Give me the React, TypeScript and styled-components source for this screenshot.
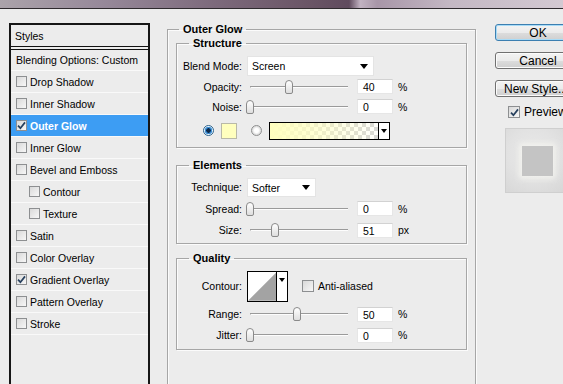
import styled, { createGlobalStyle } from 'styled-components';

const GlobalStyle = createGlobalStyle`
  html, body {
    margin: 0;
    padding: 0;
    background: #ececec;
    overflow: hidden;
  }
  body {
    width: 563px;
    height: 384px;
    font-family: "Liberation Sans", Arial, sans-serif;
    font-size: 10.5px;
    color: #000;
  }
  * { box-sizing: border-box; }
`;

const StyledPage = styled.div`
  width: 563px;
  height: 384px;
  overflow: hidden;
`;
const StyledTitleStrip = styled.div`
  height: 9px;
  border-bottom: 1px solid #2e2a2e;
  background: linear-gradient(90deg, #aba3aa 0%, #97899a 18%, #7d6a7c 38%, #6a5566 55%, #604b5e 62%, #c2b3c2 64%, #a896a8 67%, #c4b8c4 80%, #d3c9d2 100%);
`;
const StyledMain = styled.div`
  display: flex;
  align-items: flex-start;
  padding: 14px 0 0 9px;
`;

/* ---------- left list ---------- */
const StyledList = styled.div`
  flex: none;
  width: 141px;
  height: 372px;
  border: 2px solid #161616;
`;
const StyledListHead = styled.div`
  height: 25px;
  padding-left: 4px;
  display: flex;
  align-items: center;
  border-bottom: 4px double #111;
`;
const StyledListRow = styled.div<{ $sel?: boolean; $indent?: boolean; $h?: number }>`
  height: ${(p) => p.$h ?? 22}px;
  display: flex;
  align-items: center;
  gap: 3px;
  padding-left: ${(p) => (p.$indent ? 18 : 5)}px;
  border-bottom: 1px solid #f9f9f9;
  background: ${(p) => (p.$sel ? '#3d9df3' : 'transparent')};
  color: ${(p) => (p.$sel ? '#fff' : '#000')};
  font-weight: ${(p) => (p.$sel ? 'bold' : 'normal')};
`;
const StyledListText = styled.span``;
const StyledCheck = styled.span<{ $size?: number }>`
  flex: none;
  width: ${(p) => p.$size ?? 11}px;
  height: ${(p) => p.$size ?? 11}px;
  border: 1px solid #8d8f91;
  background: linear-gradient(135deg, #d9d9d9, #f7f7f7);
  display: flex;
  align-items: center;
  justify-content: center;
`;

/* ---------- center settings ---------- */
const StyledSettings = styled.div`
  flex: none;
  width: 309px;
  margin-left: 17px;
`;
const StyledFieldset = styled.fieldset<{ $top?: number; $side?: number; $h?: number }>`
  margin: ${(p) => p.$top ?? 0}px ${(p) => p.$side ?? 0}px 0;
  padding: 0;
  min-width: 0;
  height: ${(p) => (p.$h ? `${p.$h}px` : 'auto')};
  border: 1px solid #a6a6a6;
  box-shadow: 1px 1px 0 #fbfbfb, inset 1px 1px 0 #fbfbfb;
`;
const StyledLegend = styled.legend<{ $ml?: number }>`
  margin-left: ${(p) => p.$ml ?? 12}px;
  padding: 0 4px;
  font-weight: bold;
  font-size: 11px;
  line-height: 12px;
`;
const StyledGroupBody = styled.div<{ $pt: number; $pb: number }>`
  padding: ${(p) => p.$pt}px 0 ${(p) => p.$pb}px;
`;
const StyledRow = styled.div<{ $h: number; $pl?: number }>`
  height: ${(p) => p.$h}px;
  padding-left: ${(p) => p.$pl ?? 0}px;
  display: flex;
  align-items: center;
`;
const StyledLabel = styled.span`
  flex: none;
  width: 65px;
  text-align: right;
  margin-right: 4px;
`;
const StyledSelect = styled.div<{ $w: number; $h: number }>`
  width: ${(p) => p.$w}px;
  height: ${(p) => p.$h}px;
  margin-left: 1px;
  background: #fff;
  border: 1px solid #e4e4e4;
  display: flex;
  align-items: center;
  justify-content: space-between;
  padding: 1px 5px 0 4px;
`;
const StyledArrow = styled.span`
  width: 0;
  height: 0;
  border-left: 4px solid transparent;
  border-right: 4px solid transparent;
  border-top: 5px solid #000;
`;
const StyledSlider = styled.div`
  position: relative;
  flex: none;
  width: 106px;
  height: 16px;
`;
const StyledTrack = styled.div`
  position: absolute;
  left: 4px;
  right: 4px;
  top: 7px;
  height: 2px;
  border-top: 1px solid #9a9a9a;
  border-bottom: 1px solid #fdfdfd;
  border-left: 1px solid #9a9a9a;
`;
const StyledThumb = styled.div`
  position: absolute;
  top: 1px;
  width: 8px;
  height: 14px;
  border: 1px solid #8a8a8a;
  border-radius: 4px 4px 2px 2px;
  background: linear-gradient(#ffffff, #dedede);
`;
const StyledNumber = styled.div`
  flex: none;
  width: 36px;
  height: 15px;
  margin-left: 5px;
  background: #fff;
  border: 1px solid #e6e6e6;
  border-top-color: #d2d2d2;
  padding-left: 5px;
  line-height: 14px;
`;
const StyledUnit = styled.span`
  margin-left: 5px;
`;
const StyledRadio = styled.span<{ $on?: boolean; $ml?: number }>`
  flex: none;
  width: 11px;
  height: 11px;
  margin-left: ${(p) => p.$ml ?? 0}px;
  border-radius: 50%;
  border: 1px solid ${(p) => (p.$on ? '#2c628b' : '#8e8f8f')};
  background: ${(p) =>
    p.$on
      ? 'radial-gradient(circle, #0d2a4a 0 2px, #3d8fd6 2.5px 3.5px, #e6f3fc 4px)'
      : 'radial-gradient(circle, #ffffff 0 2px, #e0e0e0 4px)'};
`;
const StyledSwatch = styled.span`
  flex: none;
  width: 16px;
  height: 16px;
  margin-left: 7px;
  background: #ffffbe;
  border: 1px solid #b9b9a8;
`;
const StyledGradient = styled.div`
  flex: none;
  width: 121px;
  height: 18px;
  margin-left: 7px;
  border: 1px solid #000;
  display: flex;
  background:
    linear-gradient(90deg, #ffffbf 0%, rgba(255, 255, 191, 0.7) 35%, rgba(255, 255, 191, 0) 95%),
    repeating-conic-gradient(#d6d6d6 0% 25%, #ffffff 0% 50%) 0 0 / 8px 8px;
`;
const StyledGradientDrop = styled.div`
  margin-left: auto;
  width: 11px;
  background: #fff;
  border-left: 1px solid #000;
  display: flex;
  align-items: center;
  justify-content: center;
  ${StyledArrow} {
    border-left-width: 3px;
    border-right-width: 3px;
    border-top-width: 4px;
  }
`;
const StyledContour = styled.div`
  flex: none;
  width: 41px;
  height: 31px;
  margin-left: 1px;
  border: 1px solid #000;
  display: flex;
  background: #fff;
`;
const StyledContourDrop = styled.div`
  width: 11px;
  border-left: 1px solid #000;
  display: flex;
  justify-content: center;
  padding-top: 6px;
  ${StyledArrow} {
    border-left-width: 3px;
    border-right-width: 3px;
    border-top-width: 4px;
  }
`;
const StyledInlineCheck = styled.label`
  display: flex;
  align-items: center;
  gap: 4px;
  margin-left: 14px;
`;

/* ---------- right column ---------- */
const StyledButtons = styled.div`
  flex: none;
  width: 90px;
  margin-left: 19px;
  padding-top: 1px;
  display: flex;
  flex-direction: column;
  font-size: 12px;
`;
const StyledButton = styled.div<{ $primary?: boolean; $pad?: number }>`
  width: 86px;
  height: 17px;
  margin-bottom: 11px;
  border: 1px solid ${(p) => (p.$primary ? '#3c7fb1' : '#707070')};
  border-radius: 3px;
  background: linear-gradient(#f3f3f3 0%, #ebebeb 50%, #dddddd 51%, #cfcfcf 100%);
  box-shadow: ${(p) => (p.$primary ? 'inset 0 0 0 1px #a7dbf7' : 'inset 0 0 0 1px #fbfbfb')};
  display: flex;
  align-items: center;
  padding-left: ${(p) => p.$pad ?? 0}px;
  justify-content: ${(p) => (p.$pad ? 'flex-start' : 'center')};
  line-height: 1;
`;
const StyledPreviewCheck = styled.label`
  height: 16px;
  margin-top: -4px;
  padding-left: 13px;
  display: flex;
  align-items: center;
  gap: 4px;
`;
const StyledPreviewBox = styled.div`
  width: 70px;
  height: 65px;
  margin: 8px 0 0 10px;
  border: 1px solid #cfcfcf;
  background: radial-gradient(circle at 40% 40%, #e9e9e9 0%, #e2e2e2 45%, #d3d3d3 100%);
  padding: 17px 0 0 16px;
`;
const StyledPreviewSwatch = styled.div`
  width: 31px;
  height: 30px;
  background: #c4c4c4;
  box-shadow: 0 0 6px 3px rgba(245, 245, 240, 0.8);
`;

const Tick = ({ color = '#27405e' }: { color?: string }) => (
  <svg width="9" height="9" viewBox="0 0 9 9">
    <path d="M1 4.6 L3.4 7.2 L8 1.4" fill="none" stroke={color} strokeWidth="1.7" />
  </svg>
);

type ItemDef = { label: string; checked?: boolean; sel?: boolean; indent?: boolean };

const items: ItemDef[] = [
  { label: 'Drop Shadow' },
  { label: 'Inner Shadow' },
  { label: 'Outer Glow', checked: true, sel: true },
  { label: 'Inner Glow' },
  { label: 'Bevel and Emboss' },
  { label: 'Contour', indent: true },
  { label: 'Texture', indent: true },
  { label: 'Satin' },
  { label: 'Color Overlay' },
  { label: 'Gradient Overlay', checked: true },
  { label: 'Pattern Overlay' },
  { label: 'Stroke' },
];

const Slider = ({ pos }: { pos: number }) => (
  <StyledSlider>
    <StyledTrack />
    <StyledThumb style={{ left: `${Math.round(pos * 98)}px` }} />
  </StyledSlider>
);

const SliderRow = ({ h, label, pos, value, unit }: { h: number; label: string; pos: number; value: string; unit: string }) => (
  <StyledRow $h={h}>
    <StyledLabel>{label}</StyledLabel>
    <Slider pos={pos} />
    <StyledNumber>{value}</StyledNumber>
    <StyledUnit>{unit}</StyledUnit>
  </StyledRow>
);

const App = () => {
  return (
    <StyledPage>
      <GlobalStyle />
      <StyledTitleStrip />
      <StyledMain>
        <StyledList>
          <StyledListHead>Styles</StyledListHead>
          <StyledListRow $h={21}>
            <StyledListText>Blending Options: Custom</StyledListText>
          </StyledListRow>
          {items.map((it) => (
            <StyledListRow key={it.label} $sel={it.sel} $indent={it.indent}>
              <StyledCheck>{it.checked && <Tick />}</StyledCheck>
              <StyledListText>{it.label}</StyledListText>
            </StyledListRow>
          ))}
        </StyledList>

        <StyledSettings>
          <StyledFieldset $h={372}>
            <StyledLegend $ml={11}>Outer Glow</StyledLegend>

            <StyledFieldset $top={2} $side={8}>
              <StyledLegend>Structure</StyledLegend>
              <StyledGroupBody $pt={6} $pb={2}>
                <StyledRow $h={21}>
                  <StyledLabel>Blend Mode:</StyledLabel>
                  <StyledSelect $w={127} $h={20}>
                    Screen
                    <StyledArrow />
                  </StyledSelect>
                </StyledRow>
                <SliderRow h={21} label="Opacity:" pos={0.4} value="40" unit="%" />
                <SliderRow h={19} label="Noise:" pos={0} value="0" unit="%" />
                <StyledRow $h={29} $pl={26}>
                  <StyledRadio $on />
                  <StyledSwatch />
                  <StyledRadio $ml={14} />
                  <StyledGradient>
                    <StyledGradientDrop>
                      <StyledArrow />
                    </StyledGradientDrop>
                  </StyledGradient>
                </StyledRow>
              </StyledGroupBody>
            </StyledFieldset>

            <StyledFieldset $top={11} $side={8}>
              <StyledLegend>Elements</StyledLegend>
              <StyledGroupBody $pt={5} $pb={2}>
                <StyledRow $h={22}>
                  <StyledLabel>Technique:</StyledLabel>
                  <StyledSelect $w={69} $h={19}>
                    Softer
                    <StyledArrow />
                  </StyledSelect>
                </StyledRow>
                <SliderRow h={21} label="Spread:" pos={0} value="0" unit="%" />
                <SliderRow h={22} label="Size:" pos={0.26} value="51" unit="px" />
              </StyledGroupBody>
            </StyledFieldset>

            <StyledFieldset $top={8} $side={8}>
              <StyledLegend>Quality</StyledLegend>
              <StyledGroupBody $pt={5} $pb={4}>
                <StyledRow $h={34}>
                  <StyledLabel>Contour:</StyledLabel>
                  <StyledContour>
                    <svg width="29" height="29" viewBox="0 0 29 29">
                      <polygon points="0,29 29,0 29,29" fill="#a3a3a3" />
                    </svg>
                    <StyledContourDrop>
                      <StyledArrow />
                    </StyledContourDrop>
                  </StyledContour>
                  <StyledInlineCheck>
                    <StyledCheck $size={12} />
                    Anti-aliased
                  </StyledInlineCheck>
                </StyledRow>
                <SliderRow h={22} label="Range:" pos={0.48} value="50" unit="%" />
                <SliderRow h={20} label="Jitter:" pos={0} value="0" unit="%" />
              </StyledGroupBody>
            </StyledFieldset>
          </StyledFieldset>
        </StyledSettings>

        <StyledButtons>
          <StyledButton $primary>OK</StyledButton>
          <StyledButton>Cancel</StyledButton>
          <StyledButton $pad={8}>New Style...</StyledButton>
          <StyledPreviewCheck>
            <StyledCheck $size={12}>
              <Tick />
            </StyledCheck>
            Preview
          </StyledPreviewCheck>
          <StyledPreviewBox>
            <StyledPreviewSwatch />
          </StyledPreviewBox>
        </StyledButtons>
      </StyledMain>
    </StyledPage>
  );
};

export default App;
